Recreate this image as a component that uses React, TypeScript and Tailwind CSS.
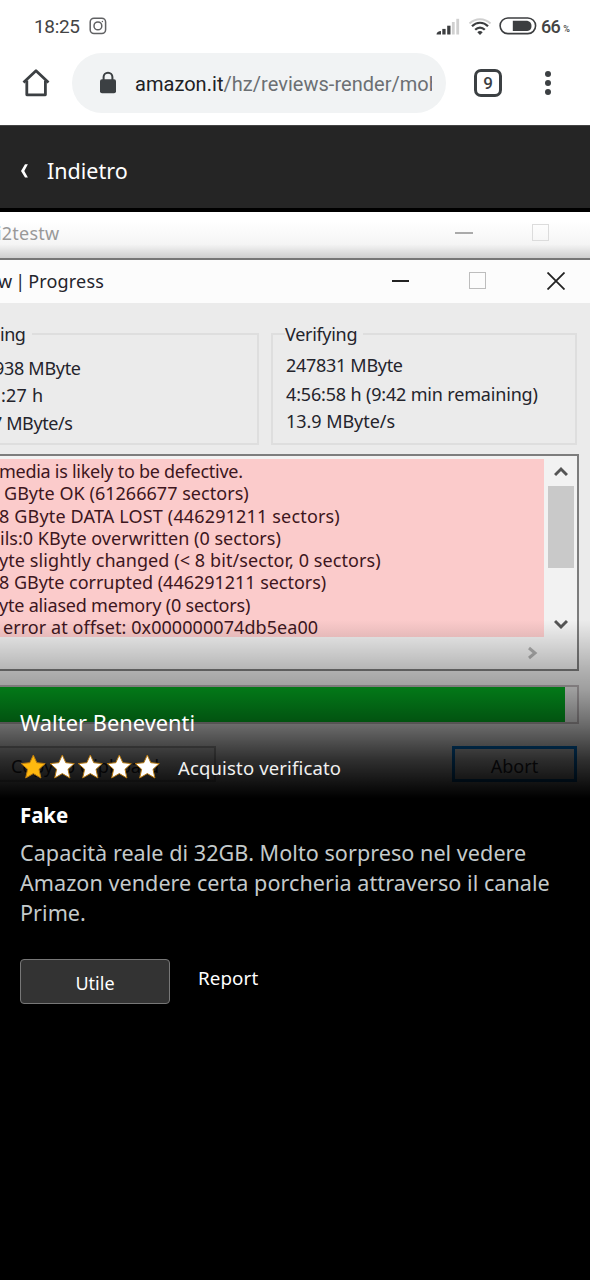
import React from "react";

const winFont = "font-['Noto_Sans','Open_Sans',sans-serif]";

function StatusBar() {
  return (
    <div className="flex h-[53px] shrink-0 items-center bg-white font-[Roboto,sans-serif] pl-[34px] text-[#444]">
      <span className="text-[19px] leading-none tracking-[-0.35px]">18:25</span>
      <svg className="mb-[1px] ml-[9px]" width="18" height="18" viewBox="0 0 18 18" fill="none" stroke="#606163" strokeWidth="1.5">
        <rect x="1.2" y="1.2" width="15.4" height="15.4" rx="3.8" />
        <circle cx="8.9" cy="8.9" r="3.9" />
        <circle cx="13.4" cy="4.5" r="0.7" fill="#606163" stroke="none" />
      </svg>
      <svg className="ml-auto" width="24" height="18" viewBox="0 0 24 18">
        <path d="M.5 16.500C.5 14 2.500 13.200 5 13v3.500z" fill="#3c3e40" />
        <rect x="6.300" y="10.900" width="3.300" height="5.600" fill="#3c3e40" />
        <rect x="11.200" y="7.700" width="3.300" height="8.800" fill="#3c3e40" />
        <rect x="15.900" y="4" width="2.800" height="12.500" fill="#d0d0d0" />
        <rect x="20.300" y="0.800" width="2.800" height="15.700" fill="#d0d0d0" />
      </svg>
      <svg className="ml-[8px]" width="24" height="18" viewBox="0 0 24 18" fill="none" strokeWidth="2">
        <path d="M1.500 5.500C7.500-.3 16.500-.3 22.500 5.500" stroke="#d0d0d0" />
        <path d="M4 8.200c4.500-4.600 11.500-4.600 16 0" stroke="#3c3e40" strokeWidth="2.200" />
        <path d="M7.200 11.700c2.800-2.900 6.800-2.900 9.600 0" stroke="#3c3e40" strokeWidth="2.200" />
        <path d="M9.300 14.200c1.600-1.500 3.800-1.500 5.400 0L12 17z" fill="#3c3e40" />
      </svg>
      <svg className="mb-[1px] ml-[7px]" width="38" height="18" viewBox="0 0 38 18">
        <rect x="1.100" y="1" width="35.500" height="15.600" rx="7.800" fill="none" stroke="#3c3e40" strokeWidth="1.600" />
        <path d="M13.800 3.800h14.500a5.200 5.200 0 0 1 0 10.200H13.800z" fill="#3c3e40" />
      </svg>
      <span className="ml-[4px] text-[18px] leading-none font-medium tracking-[-0.5px]">66</span>
      <span className="mt-[5px] mr-[20px] ml-[3px] text-[9px] leading-none font-medium">%</span>
    </div>
  );
}

function BrowserBar() {
  return (
    <div className="flex h-[72px] shrink-0 items-start bg-white font-[Roboto,sans-serif]">
      <svg className="mt-[16px] ml-[22px]" width="28" height="28" viewBox="0 0 28 28" fill="none" stroke="#3c4043" strokeWidth="2.800" strokeLinejoin="round">
        <path d="M1.500 13.500 14 1.800l12.500 11.700" />
        <path d="M4.800 11.500v14.300h18.600V11.500" />
      </svg>
      <div className="ml-[22px] flex h-[60px] w-[374px] items-center rounded-full bg-[#f1f3f4] pl-[27px]">
        <svg width="18" height="24" viewBox="0 0 18 24">
          <path d="M4.600 9V6.100a4.400 4.400 0 0 1 8.800 0V9" fill="none" stroke="#3c4043" strokeWidth="2" />
          <rect x="1" y="8.200" width="16" height="14" rx="2" fill="#3c4043" />
        </svg>
        <div className="mt-[2px] ml-[18px] w-[297px] overflow-hidden text-[20px] leading-[28px] tracking-[0.03px] whitespace-nowrap text-[#6b6f73]">
          <span className="text-[#202124]">amazon.it</span>/hz/reviews-render/mobile
        </div>
      </div>
      <div className="mt-[16px] ml-[28px] flex size-[28px] items-center justify-center rounded-[7px] border-[3px] border-[#3c4043] text-[17px] leading-none font-medium text-[#3c4043]">9</div>
      <div className="mt-[18px] ml-[43px] flex flex-col gap-[3px]">
        <span className="size-[6px] rounded-full bg-[#3c4043]" />
        <span className="size-[6px] rounded-full bg-[#3c4043]" />
        <span className="size-[6px] rounded-full bg-[#3c4043]" />
      </div>
    </div>
  );
}

function BackHeader() {
  return (
    <div className="flex h-[87px] shrink-0 items-center border-t border-b-4 border-t-[#444] border-b-black bg-[#252525] pt-[7px] pl-[20px] font-['Noto_Sans',sans-serif] text-white">
      <svg width="9" height="16" viewBox="0 0 9 16">
        <path d="M5 1.200h2.900L4.300 7.900l3.600 6.700H5L1 7.900z" fill="#fff" />
      </svg>
      <span className="ml-[18px] text-[21.500px] leading-[30px]">Indietro</span>
    </div>
  );
}

const logLines = [
  { text: "media is likely to be defective.", style: "-ml-[1px] tracking-[-0.27px]" },
  { text: "GByte OK (61266677 sectors)", style: "ml-[4px] tracking-[0.03px]" },
  { text: "8 GByte DATA LOST (446291211 sectors)", style: "-ml-[1px] tracking-[0.16px]" },
  { text: "ils:0 KByte overwritten (0 sectors)", style: "ml-0 tracking-[0.02px]" },
  { text: "yte slightly changed (< 8 bit/sector, 0 sectors)", style: "-ml-[1px] tracking-[0.08px]" },
  { text: "8 GByte corrupted (446291211 sectors)", style: "-ml-[1px] tracking-[-0.03px]" },
  { text: "yte aliased memory (0 sectors)", style: "-ml-[1px] tracking-[-0.2px]" },
  { text: "error at offset: 0x000000074db5ea00", style: "ml-[3px] tracking-[0.07px]" },
];

function Chevron({ className, d }: { className: string; d: string }) {
  return (
    <svg className={className} width="14" height="14" viewBox="0 0 14 14" fill="none" strokeWidth="3">
      <path d={d} />
    </svg>
  );
}

function ProgressPhoto() {
  return (
    <div className={`flex h-[588px] flex-col overflow-hidden bg-[#ebebeb] text-[18px] leading-[22px] whitespace-nowrap text-[#24242c] [grid-area:1/1] ${winFont}`}>
      <div className="flex h-[46px] shrink-0 items-center bg-linear-to-b from-white from-20% via-[#f5f5f5] via-70% to-[#cfcfcf] text-[#999]">
        <span className="-ml-[3px] mb-[5px] tracking-[0.2px]">i2testw</span>
        <span className="mr-[59px] mb-[4px] ml-auto h-[2px] w-[18px] bg-[#aaa]" />
        <span className="mr-[41px] mb-[5px] size-[17px] border border-[#dcdcdc]" />
      </div>
      <div className="flex h-[45px] shrink-0 items-center border-t-2 border-[#777] bg-[#fcfcfc] pb-[2px]">
        <span className="-ml-[2px] tracking-[0.18px] [word-spacing:-2px]">w | Progress</span>
        <span className="mr-[60px] ml-auto h-[2px] w-[17px] bg-[#222]" />
        <span className="mr-[61px] size-[17px] border border-[#bdbdbd]" />
        <svg className="mr-[25px]" width="18" height="18" viewBox="0 0 18 18" stroke="#222" strokeWidth="1.800">
          <path d="M.5.5l17 17M17.500.5l-17 17" />
        </svg>
      </div>
      <div className="mt-[30px] flex h-[112px] shrink-0 gap-[12px]">
        <div className="flex w-[259px] flex-col items-start border-2 border-l-0 border-[#dedede]">
          <span className="-mt-[12px] bg-[#ebebeb] pr-[6px] tracking-[-0.45px]">ing</span>
          <span className="mt-[12px] -ml-[6px] tracking-[-0.3px]">938 MByte</span>
          <span className="mt-[5px] ml-[1px] tracking-[0.2px]">:27 h</span>
          <span className="mt-[6px] -ml-[8px] tracking-[-0.4px]">7 MByte/s</span>
        </div>
        <div className="flex w-[306px] flex-col items-start border-2 border-[#dedede] pl-[12px]">
          <span className="-mt-[12px] bg-[#ebebeb] pr-[6px] tracking-[-0.3px]">Verifying</span>
          <span className="mt-[9px] ml-[1px] tracking-[-0.3px]">247831 MByte</span>
          <span className="mt-[7px] ml-[1px] tracking-[-0.17px]">4:56:58 h (9:42 min remaining)</span>
          <span className="mt-[5px] ml-[1px] tracking-[-0.05px]">13.9 MByte/s</span>
        </div>
      </div>
      <div className="mt-[9px] flex h-[217px] w-[579px] shrink-0 flex-col border-2 border-l-0 border-[#7d7d7d] bg-[#f2f2f2]">
        <div className="flex h-[181px] shrink-0 gap-[4px]">
          <div className="mt-[3px] flex h-[178px] w-[544px] flex-col items-start bg-[#fbcbcb] pt-[1px] text-[#3d1620]">
            {logLines.map((line) => (
              <span key={line.text} className={`h-[22.250px] shrink-0 ${line.style}`}>{line.text}</span>
            ))}
          </div>
          <div className="flex h-[181px] w-[26px] flex-col items-center">
            <Chevron className="mt-[9px] stroke-[#555]" d="M1 10 7 4l6 6" />
            <span className="mt-[7px] h-[82px] w-[26px] bg-[#c9c9c9]" />
            <Chevron className="mt-[49px] stroke-[#555]" d="M1 4l6 6 6-6" />
          </div>
        </div>
        <Chevron className="mt-[9px] ml-[525px] stroke-[#b0b0b0]" d="M4 2l6 5-6 5" />
      </div>
      <div className="mt-[14px] h-[39px] w-[579px] shrink-0 border-2 border-l-0 border-[#b9b3b5]">
        <div className="h-full w-[565px] bg-[#04b023]" />
      </div>
      <div className="mt-[22px] flex h-[36px] shrink-0 justify-between text-[18px]">
        <div className="flex w-[216px] items-center border-2 border-l-0 border-[#a8a8a8] bg-[#dcdcdc] pt-[3px] pl-[11px]">Copy to clipboard</div>
        <div className="mr-[13px] flex w-[125px] items-center justify-center border-[3px] border-[#0078d7] bg-[#dcdcdc] pt-[3px]">Abort</div>
      </div>
    </div>
  );
}

function Star({ filled }: { filled?: boolean }) {
  return (
    <svg width="28.500" height="27" viewBox="0 0 28.500 27">
      <path
        className={filled ? "fill-[#ffb90f]" : "fill-white"}
        d="M13.300 1l3.500 7.700 8.500.9-6.300 5.700 1.900 8.700-7.600-4.400-7.600 4.400 1.900-8.700-6.300-5.700 8.500-.9z"
        stroke="#b97a10"
        strokeWidth="1"
      />
    </svg>
  );
}

function ReviewPanel() {
  return (
    <div className="z-10 flex flex-col px-[20px] pt-[496px] font-['Noto_Sans',sans-serif] text-white [grid-area:1/1]">
      <div className="h-[30px] text-[21.800px] leading-[30px] tracking-[0.03px]">Walter Beneventi</div>
      <div className="mt-[16px] flex h-[28px] items-center">
        <div className="mb-[1px] flex w-[143px]">
          <Star filled />
          <Star />
          <Star />
          <Star />
          <Star />
        </div>
        <span className="ml-[15px] text-[18.500px] leading-[28px] tracking-[0.15px] text-[#f0f0f0]">Acquisto verificato</span>
      </div>
      <div className="mt-[18px] h-[30px] text-[20.500px] leading-[30px] font-bold tracking-[-0.1px]">Fake</div>
      <p className="mt-[8px] text-[21.600px] leading-[30px] tracking-[0.03px] whitespace-nowrap text-[#c4cacb]">
        Capacità reale di 32GB. Molto sorpreso nel vedere
        <br />
        Amazon vendere certa porcheria attraverso il canale
        <br />
        Prime.
      </p>
      <div className="mt-[31px] flex">
        <button className="h-[45px] w-[150px] rounded-[4px] border border-[#777] bg-[#333] pt-[3px] text-[18px]">Utile</button>
        <span className="mt-[5px] ml-[28px] text-[18.800px] leading-[28px] tracking-[0.1px]">Report</span>
      </div>
    </div>
  );
}

export default function App() {
  return (
    <div className="flex h-[1280px] w-[590px] flex-col overflow-hidden bg-black">
      <StatusBar />
      <BrowserBar />
      <BackHeader />
      <div className="grid grid-cols-[590px] items-start">
        <ProgressPhoto />
        <div className="h-[588px] bg-[linear-gradient(to_bottom,transparent_408px,rgba(0,0,0,0.25)_458px,rgba(0,0,0,0.33)_478px,rgba(0,0,0,0.55)_513px,rgba(0,0,0,0.8)_548px,#000_586px)] [grid-area:1/1]" />
        <ReviewPanel />
      </div>
    </div>
  );
}
